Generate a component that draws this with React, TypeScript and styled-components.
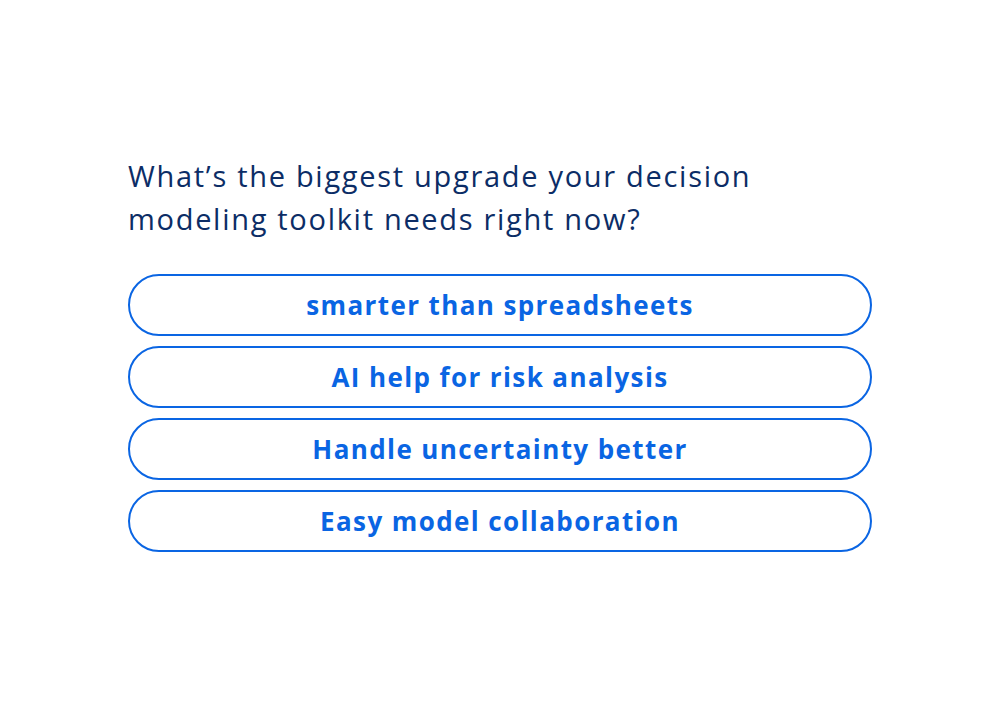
import React from 'react';
import styled, { createGlobalStyle } from 'styled-components';

const options = [
  'smarter than spreadsheets',
  'AI help for risk analysis',
  'Handle uncertainty better',
  'Easy model collaboration',
];

export default function App() {
  return (
    <>
      <GlobalStyle />
      <Page>
        <Poll>
          <Question>What’s the biggest upgrade your decision modeling toolkit needs right now?</Question>
          <Options>
            {options.map((o) => (
              <Option key={o}>{o}</Option>
            ))}
          </Options>
        </Poll>
      </Page>
    </>
  );
}

const GlobalStyle = createGlobalStyle`
  html, body {
    margin: 0;
    padding: 0;
    background: #ffffff;
  }
  body {
    font-family: 'Open Sans', 'Noto Sans', sans-serif;
  }
`;

const Page = styled.div`
  box-sizing: border-box;
  width: 1000px;
  height: 710px;
  padding-bottom: 4px;
  display: flex;
  align-items: center;
  justify-content: center;
`;

const Poll = styled.div`
  width: 744px;
  display: flex;
  flex-direction: column;
  gap: 34px;
`;

const Question = styled.div`
  font-size: 29px;
  line-height: 43px;
  letter-spacing: 1.7px;
  color: #0c2d66;
  font-weight: 400;
  padding-right: 80px;
`;

const Options = styled.div`
  display: flex;
  flex-direction: column;
  gap: 10px;
`;

const Option = styled.button`
  height: 62px;
  border: 2px solid #0a65e3;
  border-radius: 31px;
  background: #ffffff;
  color: #0a65e3;
  font-family: 'Open Sans', 'Noto Sans', sans-serif;
  font-weight: 700;
  font-size: 26px;
  letter-spacing: 1.4px;
  cursor: pointer;
`;
